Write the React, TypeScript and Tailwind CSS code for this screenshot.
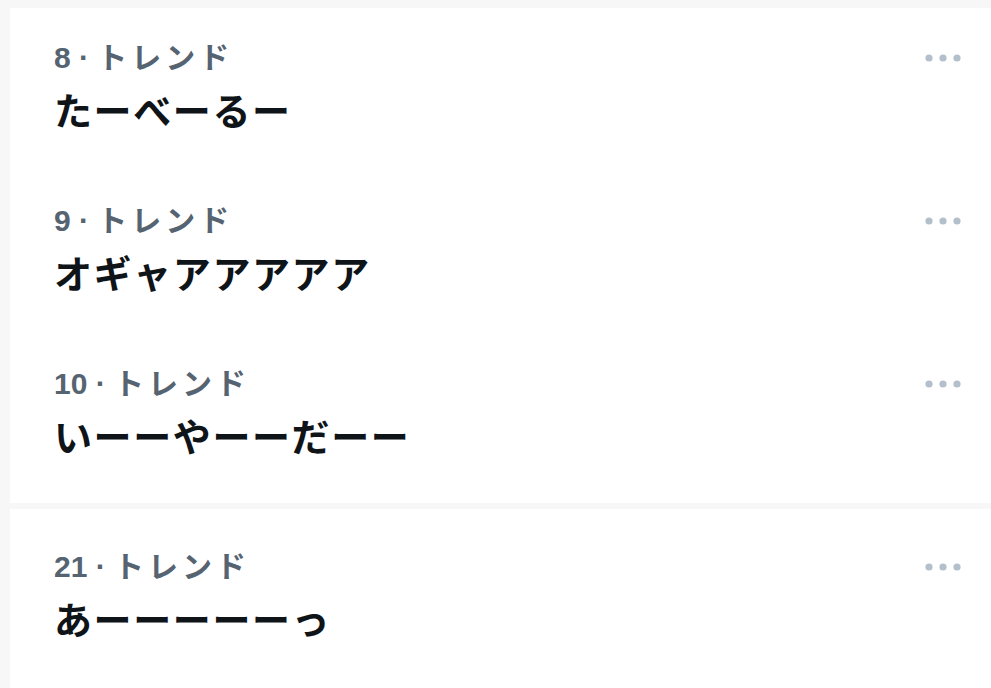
import type { ReactNode } from "react";

const FONT = {
  fontFamily: '"Liberation Sans", "Noto Sans CJK JP", sans-serif',
};

type Trend = { rank: number; title: string };

const FIRST: Trend[] = [
  { rank: 8, title: "たーべーるー" },
  { rank: 9, title: "オギャアアアアア" },
  { rank: 10, title: "いーーやーーだーー" },
];

const SECOND: Trend[] = [{ rank: 21, title: "あーーーーーっ" }];

function MoreDots() {
  return (
    <svg width="36" height="8" viewBox="0 0 36 8" className="text-[#b3bfcb]">
      <circle cx="4" cy="4" r="3.6" fill="currentColor" />
      <circle cx="18" cy="4" r="3.6" fill="currentColor" />
      <circle cx="32" cy="4" r="3.6" fill="currentColor" />
    </svg>
  );
}

function TrendRow({ trend, top }: { trend: Trend; top: string }) {
  return (
    <div className={`flex items-start pl-[44px] pr-[30px] pb-[37px] ${top}`}>
      <div className="flex-1">
        <p className="text-[30px] leading-[36px] font-semibold text-[#566371]">
          <span className="font-bold">{trend.rank}</span>
          <span> · </span>
          <span className="tracking-[4px]">トレンド</span>
        </p>
        <p className="mt-[14px] text-[38px] leading-[44px] font-bold tracking-[1.6px] text-[#0f1419]">
          {trend.title}
        </p>
      </div>
      <div className="flex h-[36px] items-center">
        <MoreDots />
      </div>
    </div>
  );
}

function Card({ children, className }: { children: ReactNode; className?: string }) {
  return <div className={`bg-white ${className ?? ""}`}>{children}</div>;
}

export default function App() {
  return (
    <div className="h-[688px] w-[991px] overflow-hidden bg-[#f7f7f8] pl-[10px] pt-[8px]" style={FONT}>
      <Card className="pb-[6px]">
        {FIRST.map((t) => (
          <TrendRow key={t.rank} trend={t} top="pt-[32px]" />
        ))}
      </Card>
      <Card className="mt-[6px] h-[200px]">
        {SECOND.map((t) => (
          <TrendRow key={t.rank} trend={t} top="pt-[40px]" />
        ))}
      </Card>
    </div>
  );
}
